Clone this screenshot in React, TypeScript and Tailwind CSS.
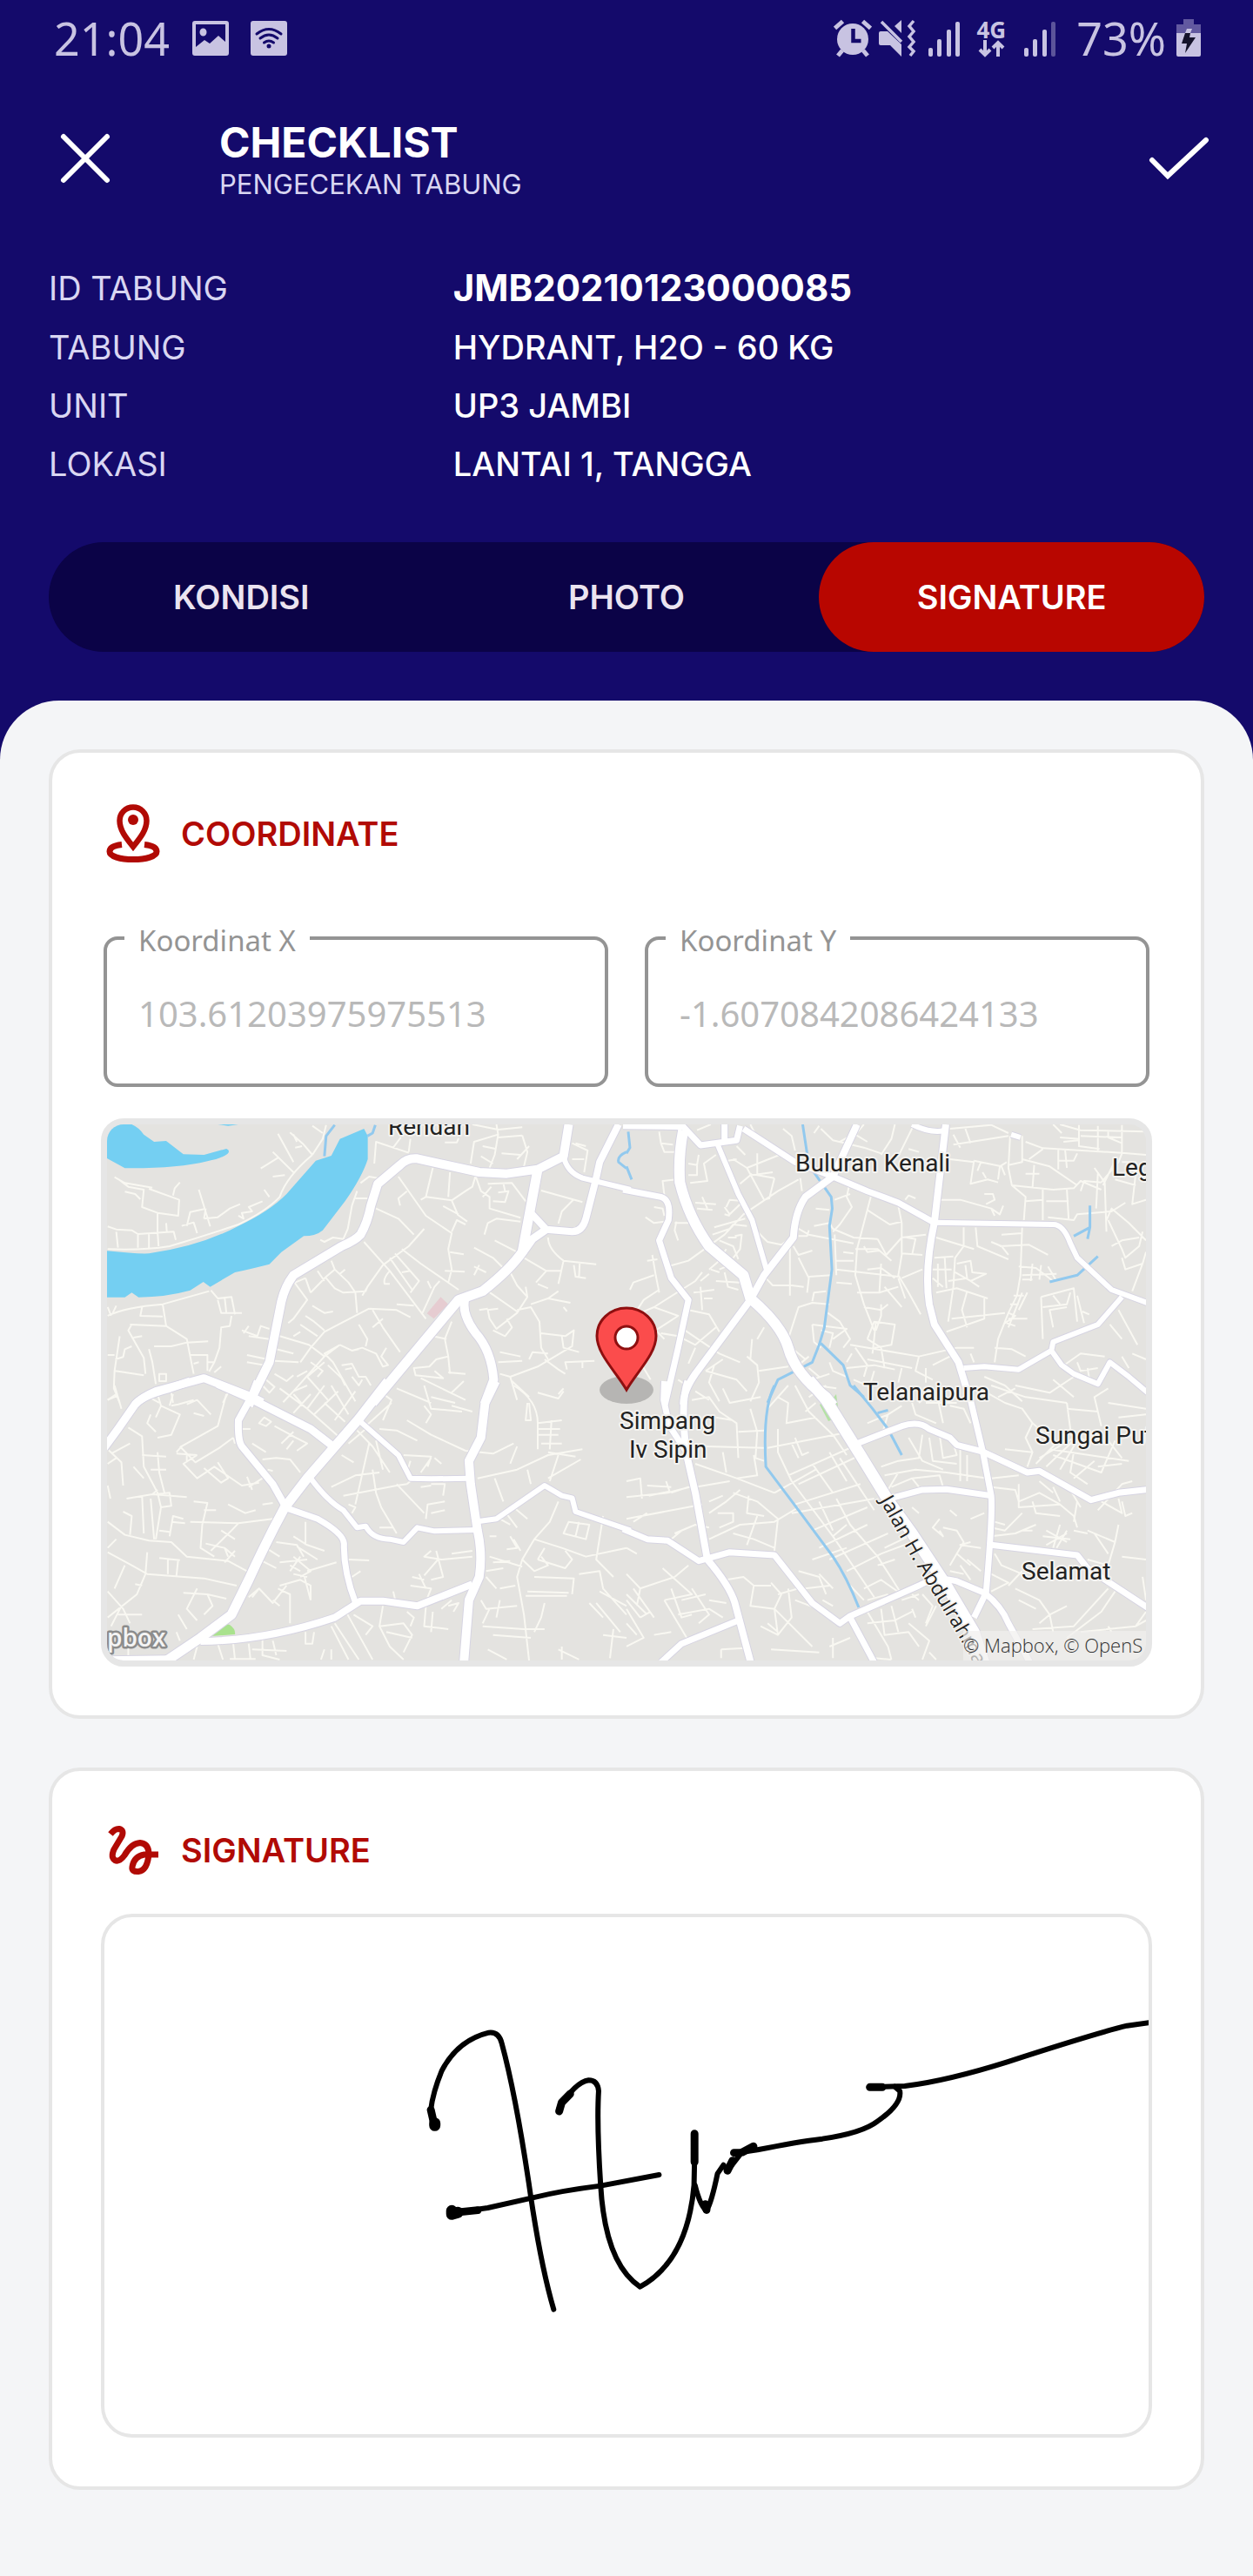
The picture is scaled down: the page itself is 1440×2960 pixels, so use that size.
import { useState } from "react";

const DETAILS = [
  { label: "ID TABUNG", value: "JMB20210123000085", strong: true },
  { label: "TABUNG", value: "HYDRANT, H2O - 60 KG" },
  { label: "UNIT", value: "UP3 JAMBI" },
  { label: "LOKASI", value: "LANTAI 1, TANGGA" },
];

const TABS = ["KONDISI", "PHOTO", "SIGNATURE"];

const COORDINATES = [
  { id: "koordinat-x", label: "Koordinat X", value: "103.61203975975513" },
  { id: "koordinat-y", label: "Koordinat Y", value: "-1.6070842086424133" },
];

interface Road {
  w: number;
  d: string;
}

interface Tile {
  transform: string;
  streets: string;
  rivers: string;
  roads: Road[];
}

// The map is split in four tiles, each with its own grid
const TILES: Tile[] = [
  {
    transform: "translate(-23 -20) scale(0.3954 0.3333)",
    streets:
      "M80 242L110 262L190 278M92 250L120 275L165 285L160 345L205 365L265 375L268 320L180 282M110 292L140 300L155 318M250 305L255 280L270 260M205 365L205 430L208 480M230 400L232 430M60 412L85 422L130 425L148 438L252 430L258 458M148 438V485M180 438V485M85 430L90 485M60 490Q160 495 240 480Q340 445 440 405Q520 360 560 310Q580 240 655 165M655 165L685 110L695 62M655 165L630 130L590 88M625 135L605 140M610 120L600 95M600 190L555 92M655 65L685 90M600 225L540 155M555 175L505 212M575 235L540 240M325 285L358 412M290 410L300 362L340 352M275 410L310 398L320 435M340 385L380 380L415 350L445 335M345 350L340 385M440 375L455 385L450 365L480 360L470 345L510 325" +
      "M530 310L515 285M835 195L840 120L935 158M940 110L935 155M890 140L912 105M1040 122H1075L1080 108M1190 60L1195 95L1185 165L1170 210M1120 60L1195 78L1265 70M1195 105L1265 98M1115 195L1125 120L1195 95M1150 135L1190 145M1205 160L1260 165M1145 170L1180 195M1250 180L1285 135M1270 205L1280 155L1265 98M1410 125L1455 150L1445 225M1420 125L1450 135M1410 180H1445M795 262L820 240L845 245M780 315L815 315M785 290L770 340L758 420L745 455L715 450L690 465L678 458M840 350L905 385L950 440M905 240L985 375L1060 435L1050 490L1060 560L1050 605M980 420L935 480L860 545L815 620L800 650M930 290L905 315L910 340M1005 210L985 310L970 320M985 310L1060 322L1100 290L1120 275L1130 235M1060 322L1078 372L1105 395M1055 225L1050 310M1035 342L1080 370M1060 430L1075 390L1100 405M1040 565L1098 568M1055 500L1095 508" +
      "M1130 240L1145 290L1170 310V350L1260 382M1165 265L1235 262L1275 325M1180 325L1215 328L1225 290L1195 295M1215 290L1210 262M1150 310L1175 275M1155 440L1165 400L1190 385L1260 395M1320 288L1440 328M1415 318L1380 360L1370 402M1340 450Q1340 490 1385 530L1480 542M1385 530L1370 610M1415 545L1420 585L1450 590M1430 585L1432 540M1270 520L1335 565L1380 565M1335 565L1305 605M1310 610L1340 625M1185 460L1250 500M1125 485L1180 520L1210 555M1140 545L1125 580M1160 570L1125 550M1230 570L1250 615L1280 655L1250 710L1190 765L1170 730L1165 700L1195 695M1165 635L1250 705M1140 700L1165 695M1250 700L1290 690L1315 740L1320 830L1340 870M1280 655L1275 620M1290 680L1340 660L1405 675M1340 660L1370 635M1385 690L1395 705M1180 770L1215 790L1235 760L1220 730" +
      "M1320 780L1390 790L1415 770L1410 825L1310 895L1230 930M1330 870L1370 905L1390 920M1380 790L1385 830L1430 845M1395 905L1390 880L1475 875M1440 880V900M1200 845L1260 860M1195 880L1265 875M1285 870L1295 845L1340 850M1200 920L1230 930L1250 1010M1235 945L1285 1000M1310 985L1370 1005L1385 980M805 465L880 565L985 730M915 490L970 540L1080 630M880 520L945 630M895 505L965 600L940 640M915 570L940 565M880 565Q860 590 865 610L880 610M990 600L1000 625M975 710L1010 620L1025 600M900 680L950 685M710 530L720 560L695 585L650 640M720 560L760 605L780 640L785 710M695 590L720 625L745 640L810 635L815 620M600 600L640 665L600 730L585 745M635 590L650 640M670 565L690 600M605 605L635 590M735 575L750 560M655 685L690 710L715 705" +
      "M820 695L690 775L650 830L620 880M820 695L900 700L940 725M830 700L860 760L910 845M860 730L830 760M790 750L815 800L810 825M735 820L690 860L600 980M735 820L770 840L790 835M735 820L690 850L715 880L780 1015M690 860L645 820L560 790M770 840L800 830L840 850L860 895L875 890L855 860L870 830M635 720L660 740L690 770M620 750L670 790M600 790L620 775M550 835L600 850M545 875L615 880M690 880L640 930L700 1010M650 880L685 910L670 930M700 890L740 935L750 960M740 890L770 885L790 930L810 930L825 960M750 905L770 900M770 930L790 960L800 940M545 920L580 945L600 925M520 940L545 965L530 985L510 960M640 910L610 930M570 1018L600 980L640 960M1060 740L1040 800L1050 860L1055 920M1005 790L1045 800M1050 860L1015 870L995 895L950 900L955 925L1035 935L1010 910M1050 915L1100 920M1095 945L1060 985M970 935L1100 1010" +
      "M60 720Q110 690 220 680L355 635M60 690L70 720M85 685L75 710M160 690L155 720L220 722M220 680L230 755L125 750M360 632L380 660L420 655L430 715M400 655L405 710M380 665L390 710H450M420 720L415 755L390 760L385 830L370 880L355 912M230 755L290 800L310 920M195 825L245 825L290 812L352 808M130 750L120 770L165 865L170 920M180 835L190 880L200 955M95 790L80 910L78 970L95 1020M60 855H80M82 870L105 862L110 835L130 825M82 910L165 925M135 795L160 790M300 855H350V910M350 880H370M310 885L325 880M370 915L390 895M210 920H230V945H210ZM455 780L470 755M450 770L495 790L505 755L530 765M470 790L530 800M465 855L525 870M465 880L515 890M60 1010L85 990M245 985L250 1020M410 985L395 1020M180 1000L210 1020",
    rivers: "M720 62L695 100L690 170M838 62L830 90L815 100M1568 155Q1540 170 1545 190L1568 212",
    roads: [
      { w: 9, d: "M1545 60L1490 190L1478 255L1450 385Q1440 430 1410 430L1335 422L1290 365" },
      { w: 11, d: "M1400 60L1385 170L1310 215L1220 230L1140 225L960 178Q930 175 910 200L845 265L825 340Q815 400 795 440Q780 460 740 480L600 580Q575 620 565 670L530 880L480 1000L470 1030" },
      { w: 12, d: "M1310 215L1265 500Q1230 560 1150 635L1080 665L830 1020" },
      { w: 10, d: "M1268 500L1295 455L1335 422" },
      { w: 7, d: "M1385 170Q1395 225 1440 245L1580 285" },
      { w: 11, d: "M1100 655Q1085 710 1130 780Q1175 840 1182 940L1155 1025" },
      { w: 10, d: "M140 1025Q160 1000 200 980L340 935L480 1000L510 1018" },
    ],
  },
  {
    transform: "translate(597 -20) scale(0.3954 0.3333)",
    streets:
      "M95 85L100 125L135 130M100 125L110 155L140 155M180 195L205 200L210 165M180 235H205V195M185 262L235 255L225 195L260 165M205 80L245 60M360 60L385 120L410 115M320 135L345 165M310 180L350 210L400 320L415 315L430 245M350 210L445 165M365 235L425 225M330 265L365 230M380 160V235L430 245M455 75L480 100L490 150M295 185L320 180M545 90L560 65M565 75L600 115L690 140L740 160M620 120L650 100M690 60L665 95L700 120M780 60L770 110L740 165M790 170L835 62M820 145L850 155M500 250L440 290L340 370L285 440L180 530L120 550M505 245L510 290M290 345L300 320L345 325M285 345L300 370L335 330M285 370L300 375M200 330L260 335M205 350L250 355M220 310L235 350M255 415L345 385M250 440L300 420L310 405L350 410M315 445L335 440L330 490L310 520M295 450L320 450M270 460L310 480L325 525M240 560L265 535L290 490M245 560L270 570M240 575L215 600M55 380L80 400L110 395" +
      "M80 345L105 350L110 375M140 400H180M145 395L140 425L150 460M110 305L105 255L145 250M380 430L410 465L450 475L480 450M405 590L425 615L480 615M475 480V650M485 480L500 510L540 495M500 520L530 590L525 640M480 615L515 620M650 255L640 310L655 345L620 405L600 430M605 320L650 300M650 265L680 280M710 310L690 400L670 490L665 580L690 680L720 770M700 355L765 405L800 395M790 340L800 400V510L790 580L820 640L855 715M810 320L820 305L840 315M500 420L530 440L660 470M500 445H525L530 425M550 350L590 355M545 410L590 400L600 420L660 450L730 455M605 440L610 580M630 500L660 505M610 560L790 585M610 530L660 530M665 490L730 490L770 530M730 455L755 510L800 450L870 440M690 480L700 500L735 495M815 450L840 455L830 510M800 505L860 510M610 605L655 610M595 580L530 585M670 640L735 640M740 540L735 640L790 620M700 560L740 555L780 590" +
      "M590 680L540 675L500 690L470 800M540 670L545 640L580 635M740 680V720L725 770M690 690L740 700L760 680M750 620L800 690M790 590L810 660M800 590L860 560M910 320L970 320L1060 350L1085 370L1095 340M1060 350L1070 375M1040 300L1065 300L1070 320L1045 335M980 415V480L955 520L950 620L935 740M900 450L1010 490M1015 415L1020 480L1060 500L1110 525M895 520L950 515M890 560L945 560M905 540V620M925 520L930 625M890 590L920 620M900 640L960 625L1050 660M960 540L1000 530L1005 570L1045 575L1000 600L1025 620M955 570L1000 600M945 730L1100 710M990 635L975 700L990 760M1040 660V730L930 775M935 600L990 590L985 545M1150 415L1145 580L1135 650L1110 710L1080 800L1070 880M1090 440L1150 435M1085 480L1170 475L1225 510M1060 465L1090 480L1110 510M1140 550L1190 555L1240 600M1150 580L1250 575M1180 540L1175 600M1205 545L1200 595M1225 550L1250 600M1150 595H1180M1110 710L1130 720L1100 745" +
      "M1125 650H1155M1115 680H1140M1105 745L1130 755M1110 730H1165M1150 640L1110 760M1165 640L1140 700M1205 655L1300 625L1310 740M1205 655L1210 800M1210 690L1280 680L1290 640M1240 650L1260 680M1240 760L1230 700L1280 690M1325 705L1345 715M1310 650L1330 745M940 75L1060 62L1110 90M950 130L1110 100M950 95L970 140M985 75L1000 125M1115 100L1110 210L1120 270L1160 310L1155 390M1110 200L1150 190L1150 100M1120 270L1240 285L1300 280L1320 255L1380 285M1080 250L1085 205L1105 190M1010 185L1090 205L1100 235M1010 185L1000 265L1050 250L1080 260M940 180L1010 190M1030 190L1020 220M1045 245L1035 225M1160 120L1210 142L1440 158L1510 165M1150 180L1230 205L1310 270M1210 145L1170 180M1255 145V215M1275 150L1280 210M1255 185L1300 185L1310 160M1160 230H1200M1185 200L1180 280M1210 285V390M1160 325L1210 320M1220 325H1285M1280 285L1285 385M1225 380L1300 390L1310 370L1410 360L1450 330" +
      "M1240 60L1265 90M1260 60L1320 80L1510 85M1315 62V135L1375 145M1320 100L1440 105M1370 65V150M1400 85V105L1440 125M1440 62V160L1430 190L1380 260M1260 105L1315 110M1270 120L1315 115M1440 190L1480 190L1500 240M1360 210L1390 260L1395 430M1370 230L1365 350M1420 185L1385 270M1320 290L1330 255L1380 260M1480 230L1470 335L1510 320M1420 250L1480 270M1395 390L1410 350L1460 400L1510 460M1400 390L1440 490L1450 520L1490 480L1500 430M1410 480L1440 460L1490 450M1440 520L1450 560L1500 540L1510 500M1500 540L1470 635M1430 700L1485 820M1405 750L1440 800M1260 900L1320 850L1390 860M1310 880L1320 910L1370 900M1340 900L1345 935M1440 860L1460 900M1470 850L1510 870M1240 940L1300 1000M1300 930L1230 985L1130 960" +
      "M75 510L85 580L95 640M60 530L90 525M95 630L50 665L20 720M10 630L20 605L80 580M220 570L200 600L80 690L0 730M80 690L150 720L85 770L110 800M195 640L255 630M215 620L220 700M225 660L250 660M260 600L330 605M285 570L295 620L325 630M270 560L310 540M180 700L240 715L270 775M100 780L150 790L200 820L260 760M200 830L180 885M170 770L270 850L330 880M150 940L175 960M230 910L320 940L350 980M230 910L280 870M255 890L240 950L270 1015M370 640L390 700M365 800L360 870L380 890L385 950L360 1015M385 910L470 895M380 890L350 860M400 760L380 800M490 840L520 870M530 860L500 890M540 750L545 810L565 830M540 750L640 765L600 800M585 710L620 740L650 800L630 830M565 770L600 780L590 830M700 800L720 740L780 750L770 820L720 830M700 800L740 830L750 900M725 740L715 850M650 820L850 860M655 850L640 880M665 830L700 890L690 930M700 870L830 900M850 860L840 910L890 940M850 860L960 830L1010 830M890 890L940 860M870 900V950M640 900L720 890L780 905M590 880L600 910L640 930M540 940L590 920M550 960L610 970M560 930L530 900M530 1000L580 960M660 940L700 960M720 910L710 950M800 900L790 950M1070 830L1120 835L1160 860M1000 850L1010 880M1040 930L1100 960L1150 1015M0 870L50 900L70 940",
    rivers:
      "M512 60L530 200L595 310L598 350L590 410L597 560L575 760L560 820L540 880L440 940L410 1020M565 815L630 890L650 960L690 1000M1347 340V415L1300 445M1347 415L1340 455M1370 515L1310 580L1230 603M5 85L10 140L0 160M0 205L15 250",
    roads: [
      { w: 8, d: "M-10 285L100 310Q130 320 122 390L95 460L130 590L180 665L150 830L112 1025" },
      { w: 8, d: "M-10 65L165 68L215 132L320 115L330 65M285 60V120" },
      { w: 7, d: "M265 130L325 300L365 390L408 565" },
      { w: 8, d: "M340 75L490 190L600 240L700 290L790 330L892 397" },
      { w: 9, d: "M670 60L600 240L520 310Q490 360 485 450L400 580L360 665L200 920Q165 980 165 1025" },
      { w: 9, d: "M928 60L895 397Q865 560 880 680L895 750L965 880L988 970" },
      { w: 7, d: "M830 60Q880 90 922 82M1118 95L1145 105" },
      { w: 7, d: "M892 398L1240 405Q1270 405 1290 470L1310 520L1410 630L1520 678" },
      { w: 7, d: "M1440 655L1370 750L1240 810L1235 840L1140 905L1040 895L980 900M1235 840L1265 890L1300 920L1370 955L1405 880L1460 930L1520 990" },
      { w: 13, d: "M165 80Q150 170 155 260Q180 380 240 480L340 580L360 660Q450 750 470 830Q490 920 580 1000L600 1030" },
    ],
  },
  {
    transform: "translate(-23 300) scale(0.3954 0.3333)",
    streets:
      "M80 0L100 80M60 50L90 35M120 145L160 175L165 280L205 370L215 420L245 415L240 370L200 375M60 220L100 265L105 345M70 235L125 200M60 270L85 250M205 230L210 300L225 370M135 280L165 320M160 240L230 245M185 290H230M185 100L175 130L200 160M205 30L215 70L270 100L245 170L205 180M250 30L240 70M215 70L200 110M245 70L265 65L310 50M290 65L320 50L360 100M405 30L380 140L275 210L260 230M310 95L340 105M270 210L315 265L385 215L425 180M260 235L320 240M290 235V265M320 240L280 270L320 320L370 280L450 345L500 335M340 285L390 335L410 320L380 265M425 180L430 200M60 345L68 390M115 390L190 375L205 360M160 380L165 510M185 390L195 530M215 420L200 530M105 435L130 450L125 515M190 375L290 385M60 470L110 515L180 535L245 540L290 590L410 605L465 640M60 560L85 530M60 575L130 620L175 650L340 665L435 690" +
      "M175 575L170 650L145 720L60 800M235 600V650M265 600L260 655M210 595L270 602M80 700L110 620M140 685L160 690M60 710L105 770L125 820M90 790H160M100 760L70 830M280 715L350 720L365 760L340 790M350 720L405 735M320 700L290 770L320 810M240 520L250 450L280 460M210 500L240 505M245 470L285 475M310 400L350 405L335 480L330 560L370 590M300 470L440 475L540 460M440 475L420 500L360 570M340 430H375M410 410L460 440L490 430M345 545L400 560L430 590M390 500L430 530M400 560L410 590M400 610L430 570M510 410L540 405M470 350L510 320M465 315L480 360M480 200L520 230M510 255L550 250L590 255L620 300M525 290L540 295M500 130L515 110L535 125L520 140ZM440 150H475M545 140L600 175M565 200L600 160M590 170L640 200L610 225M580 220L600 190M560 10L640 80L740 185M600 30L630 70M650 30L600 95M640 80L690 0M690 60L750 125M710 0L760 100M660 100L730 20M720 120L780 20" +
      "M740 240L775 265M785 155L830 210L880 300M840 190L860 290M820 200L780 410M810 150L760 200M860 120L885 50L850 20M810 140L885 60M850 150L900 155L960 190M710 350L780 310L850 300M745 380L900 345L930 340M760 410L780 420L770 440M830 290L840 370L855 420L900 510M850 490H890M900 340L980 440M985 460L990 410L1040 400M1000 440L1040 430M920 240L1000 245L990 280M1000 250L970 300M1010 250L1030 270M940 260L930 300M1000 340H1040L1035 380M970 350L1000 345M930 340L960 310M930 120L1000 170L1100 225M980 70L1000 100L985 130M980 0L1000 80L1090 90M1060 70L1120 90M900 10L1000 60M1000 40L1070 60M1100 225L1180 235L1240 200M1135 320L1250 290L1340 240L1440 220M1185 320L1210 400M1280 290L1290 340M1340 320L1435 255M1345 330L1370 240M1240 0Q1310 50 1310 130V220M1310 130L1380 120M1310 150H1375M1310 170H1370M1320 200H1380M1350 120L1345 220M1280 60L1275 120H1290L1285 60M1250 210L1230 270M1340 230L1420 245M1370 30L1385 10" +
      "M1370 400L1345 470L1300 530L1265 600L1250 660L1270 790L1285 950M1240 420L1280 460M1215 435L1250 490M1200 460L1230 480M1400 470L1460 480L1450 530L1385 510ZM1430 470L1420 520M1500 450L1480 600L1530 660M1300 530L1380 560L1450 590L1568 560M1310 600L1390 630L1410 600L1390 570M1330 560L1310 600M1265 600L1300 640L1340 620L1320 590M1300 660L1415 665L1410 720M1280 710L1400 715M1275 725H1395M1170 590L1265 625M1180 610L1230 605M1160 640L1210 630M1160 660L1190 700M1240 530L1260 570M1230 520L1250 560L1220 565M1170 520H1190M1200 700L1245 690M1430 650L1490 640L1500 700L1568 790M1490 710L1568 760M1480 750L1550 850M1530 840L1520 940M1500 860L1568 870M1460 750L1500 800M1145 740L1160 770L1250 760M1170 770L1150 820M1200 740L1190 800M1150 830L1270 840L1330 840M1180 860L1290 870M1330 750L1320 800L1300 850M1165 910L1220 945M1380 900V945M1370 910L1430 945" +
      "M550 540L610 550L630 590M600 520L640 550L690 570M635 470V550M610 555L670 600M600 590L650 640L620 660M560 610L640 600M620 590L590 640M590 620L620 640M640 640L725 610M560 690L620 670L650 690V740M580 690L540 750L500 700L480 730M555 700L590 720V820M540 740L560 760M600 650L640 660M630 650L650 740M500 600L550 630M520 560L560 590M470 730L500 700M760 600L820 603M770 660L795 640M755 785L790 860L830 945M720 820L790 945M710 830L760 945M775 790L830 830L810 860M860 760L850 830L880 900L920 945M850 830L920 820L945 860L920 920M870 850L945 870M930 780L950 800L940 830M985 760L980 830L1050 840M1005 780L1000 850M890 710L895 735M940 690L1000 700L990 730M945 660L980 670M965 650L985 700M1000 570L980 590L1030 600L1120 590M1015 570L1035 660L1000 670M1020 600L980 655M1060 580L1120 570M1030 770L1060 740M1050 760L1080 750L1065 780M380 890L395 945M425 890L430 945M470 890L475 945M510 860V930L560 945M480 910L580 915M540 880L550 930M635 850V890H655L660 850M265 790L290 840M260 850L270 880M415 943H490M120 900V945M320 900L310 945M690 910L680 945M710 910V945",
    rivers: "",
    roads: [
      { w: 10, d: "M50 215L90 150L140 65Q160 35 240 10L300 -15M380 -5L475 45L650 150L712 207" },
      { w: 9, d: "M495 -15L475 45L440 120Q438 190 450 210L540 340L578 420" },
      { w: 7, d: "M790 120L905 240L940 320L1000 322L1112 320" },
      { w: 7, d: "M650 320Q700 400 745 430L785 490L810 485Q830 530 880 530L920 540L960 490L1010 502L1130 498" },
      { w: 8, d: "M585 425L670 460Q745 510 747 545Q745 640 780 748" },
      { w: 7, d: "M1140 468L1190 460L1330 345L1380 380L1410 388L1420 435L1580 500" },
      { w: 9, d: "M330 882Q520 880 720 800L795 743L860 743L960 760L1120 685" },
      { w: 7, d: "M50 943L240 940" },
      { w: 11, d: "M1188 -15L1157 60L1145 180L1110 260L1115 340L1135 500Q1150 580 1140 660L1110 740L1095 960" },
      { w: 12, d: "M875 -15L790 115L640 320L575 420Q520 540 470 670L420 790L330 870L230 950" },
    ],
  },
  {
    transform: "translate(597 300) scale(0.3954 0.3333)",
    streets:
      "M200 20L240 50M190 50L240 40L270 90L320 130L325 250M230 210L400 215M260 110L310 120M280 10L300 60L390 40M360 80L380 160L375 250L400 260M325 160L400 155M470 0L410 80M440 40L470 60L465 130L550 110M490 0L530 90L600 170L640 240M440 150L440 230L480 330L600 520L720 730M550 60L520 90M410 215L650 160M480 200L500 250M490 180L510 240L530 230M470 310L660 210M500 340L680 240M430 370L550 290M540 270L600 370M590 230L640 330M620 250L720 430M490 410L680 340M480 440L720 390M540 500L700 420M560 400L600 500M610 390L650 480L730 590L800 720M560 560L700 480M590 600L760 510M600 520L640 480M640 640L740 580L830 540M690 700L740 670L800 720L860 690M650 690L690 740M700 740L760 720M750 560L820 520M780 600L730 620M200 270L320 320L430 370M280 230L290 300M320 320L380 310L370 240M200 350L300 330M0 385L120 370L200 345M0 330L40 320L45 390M60 345L130 350M65 380L125 365L115 330M130 370L180 350" +
      "M0 460L220 410M20 470L60 440M240 440L290 400L330 360M265 440H310V470L270 490M310 370L380 400L440 460L430 570M355 380L350 440L400 450M240 530L330 480L430 470L500 420M310 510L370 530L430 560M380 450L350 550M240 400L280 380M140 510L200 480L240 490M130 530L160 500M0 560L30 580M0 650L40 700L140 660M20 700L80 800M0 720L60 790M0 740L40 800M0 770L50 870L0 900M40 700L30 760M105 630L190 720L110 740M180 620L140 660M130 700L160 800L190 790M110 740L140 800L180 880M160 740L230 720M150 790L240 770L280 800M190 700L240 790L210 820M240 740L290 750M290 670L340 660L370 690L360 760L430 770L450 720L420 680M370 690L420 690M430 770L440 860L390 830M430 770L540 900M440 860L480 800L470 700M410 820L440 850M440 720L500 700M420 910L560 920M490 740L600 790M500 640L560 660L580 720M540 600L640 560M520 700L590 690M570 740L600 760M590 900L650 870M600 870V940" +
      "M700 780L760 900L770 945M740 770L750 860L820 850L850 900M770 760L790 850M700 820L780 810L830 780M820 820L880 880L860 945M830 770L840 800M860 720L890 760L870 820M900 760L870 830M830 720L850 740M800 740L850 720M940 750L970 800M760 100L740 180M700 130L760 100L800 70M830 60L840 100L900 130M850 60L880 30M900 20L920 130M870 60H960M940 70L980 80L1000 130M740 280L790 260L850 250L860 170M820 180L860 260L920 290M880 180L890 260L960 270M910 170L920 250L960 240L950 200M970 210V330M750 310L840 290L930 300L1050 320M770 350L830 320L850 350M760 360L790 300M830 320L910 310L920 350M1060 320L1140 310M990 240L990 330M1040 20L1100 60L1150 80L1180 130L1220 170M1080 40L1130 10M1060 0L1160 40L1280 60M1180 130L1160 180L1180 230L1165 280M1280 60L1290 150L1190 270M1280 80L1370 90L1380 140M1370 90L1360 40L1400 10M1400 60L1510 80M1290 170L1360 200M1100 220L1180 230M1200 250L1300 180M1220 280L1300 190M1260 290L1310 190M1230 220L1460 260M1240 240L1380 300L1420 190" +
      "M1300 230L1290 300L1340 340M1360 260L1300 320M1370 280L1440 270M1400 190L1440 250M1430 110L1510 100M1060 350L1130 360L1140 400M1140 340V420L1260 410M1140 400L1200 370L1260 410L1300 450L1310 490M1240 350L1260 400M1200 330L1240 370M1180 400L1190 440L1260 450M1290 360L1320 420M1310 400L1300 470M1370 430L1440 340L1470 330M1380 400L1440 440L1430 390M1440 400L1450 450L1470 440M1060 490L1100 500L1150 440M1070 470L1100 480M1060 520L1130 510L1190 480M1150 500L1180 500M1210 520L1290 530M1220 500L1280 540M1260 480L1240 560M1280 500L1250 560M1220 550L1280 510M1300 500L1340 510M1340 500L1420 540L1430 480M1360 510L1400 580M1420 540L1400 620L1340 600M1440 590L1510 600M1500 660L1510 740M1070 580L1090 620L1150 650M1060 650L1110 680L1060 710M1150 640L1110 690M1130 700L1200 740L1230 790L1200 820M1230 790L1280 760M1230 790L1240 850M1140 740L1190 770M1180 840L1300 830L1400 700M1280 870L1380 780L1420 710M1320 850L1480 830L1510 810M1480 830L1510 780M1400 830L1410 850" +
      "M910 460L890 490L920 520L910 500M920 490L960 500L980 540L960 580L1000 620M940 430L960 450M1000 460L1040 440M1000 540L970 550L1030 560M960 580L940 620M990 600L1030 640M970 620L1000 670M940 640L980 650M830 420L850 440M560 650L600 700M880 920L900 945M720 940L770 945M80 860L130 850M0 820L30 860M40 800L70 780M275 910L345 905M275 910V940",
    rivers: "M430 0Q395 80 405 280L500 430L600 590Q640 660 675 765M660 0L715 80L760 150L800 240M730 95L760 85",
    roads: [
      { w: 8, d: "M110 -15L108 50L125 140L180 240" },
      { w: 9, d: "M178 -15Q155 60 175 240L200 370L235 600Q300 690 315 750L362 960" },
      { w: 8, d: "M-10 495L60 530L120 535L210 605L300 575L430 585L540 750L620 820L650 795L850 690Q900 655 960 675L1040 715Q1090 760 1110 820L1175 960" },
      { w: 8, d: "M325 810L160 890L100 955M650 800L720 955" },
      { w: 8, d: "M670 200L800 140Q850 120 880 150L940 180L960 205L1035 228L1165 300L1200 295L1350 395L1430 370L1520 358" },
      { w: 8, d: "M770 388L860 360L930 358L1060 380" },
      { w: 8, d: "M1000 50L1035 225L1060 380Q1065 440 1045 715L1010 800" },
      { w: 8, d: "M1060 550L1310 585L1340 630L1520 770" },
      { w: 14, d: "M530 -20L580 50L680 240L760 395L830 510L930 690L1010 850L1040 960" },
    ],
  },
];

const PLACES = [
  { name: "Rendan", x: 323, y: 12 },
  { name: "Buluran Kenali", x: 791, y: 54 },
  { name: "Leg", x: 1155, y: 59 },
  { name: "Telanaipura", x: 869, y: 317 },
  { name: "Simpang", x: 589, y: 350 },
  { name: "Iv Sipin", x: 600, y: 383 },
  { name: "Sungai Put", x: 1067, y: 367 },
  { name: "Selamat", x: 1051, y: 523 },
];

function StatusBar() {
  return (
    <div className="flex items-center justify-between pt-2 pr-[60px] pb-1 pl-[62px] font-['Noto_Sans',sans-serif] text-[52px] leading-[72px] text-[#c8c3e2]">
      <div className="flex items-center">
        <span>21:04</span>
        <svg className="ml-[26px] h-10 w-[42px]" viewBox="0 0 42 40" fill="currentColor">
          <path
            fillRule="evenodd"
            d="M3 0h36a3 3 0 0 1 3 3v34a3 3 0 0 1-3 3H3a3 3 0 0 1-3-3V3a3 3 0 0 1 3-3zM4 4v26l10-8 6 4 10-9 8 7V4zM12.500 8.500a4 4.500 0 1 1 0 9 4 4.500 0 0 1 0-9z"
          />
        </svg>
        <svg className="ml-[25px] h-10 w-[42px]" viewBox="0 0 42 40">
          <rect width="42" height="40" rx="3" fill="currentColor" />
          <g fill="none" stroke="#140a6b" strokeWidth="3" strokeLinecap="round">
            <path d="M7 15q14-11 28 0M11 20q10-8 20 0M15.500 25q5.500-4 11 0" />
          </g>
          <circle cx="21" cy="29" r="2.500" fill="#140a6b" />
        </svg>
      </div>
      <div className="flex items-center">
        <svg className="h-11 w-11" viewBox="0 0 44 44" fill="none" stroke="currentColor" strokeWidth="5">
          <circle cx="22" cy="23" r="18" fill="currentColor" stroke="none" />
          <path d="M1.500 10.500l9-8M42.500 10.500l-9-8M10 36l-5 6M34 36l5 6" />
          <path d="M22.500 11v14h9" stroke="#140a6b" strokeWidth="4.500" />
        </svg>
        <svg className="ml-2 h-11 w-[43px]" viewBox="0 0 43 44">
          <path fill="currentColor" d="M2 14h8l16 15v14L13 30H2a2 2 0 0 1-2-2V16a2 2 0 0 1 2-2zM18 8l8-7v15z" />
          <g fill="none" stroke="currentColor" strokeWidth="3.500">
            <path d="M3 3l23 23M40 2l-5 6 5 6-5 6 5 6-5 6 5 5-4 5" />
          </g>
        </svg>
        <Signal className="ml-3.5 h-11 w-9" />
        <div className="ml-[18px] flex w-9 flex-col items-center">
          <span className="text-[26px] leading-6 font-bold">4G</span>
          <svg className="h-5 w-8" viewBox="0 0 32 20" fill="none" stroke="currentColor" strokeWidth="4">
            <path d="M9 0v17M3 11l6 6 6-6M24 19V3M18 9l6-6 6 6" />
          </svg>
        </div>
        <Signal className="ml-5 h-11 w-9" faded />
        <span className="ml-6">73%</span>
        <svg className="ml-3 h-11 w-7" viewBox="0 0 28 44">
          <path d="M8 0h12v6h8v10H0V6h8z" fill="#6259a0" />
          <path d="M0 16h28v25a2 2 0 0 1-2 2H2a2 2 0 0 1-2-2z" fill="currentColor" />
          <path d="M12 11h6l-2 5h-6z" fill="currentColor" />
          <path d="M10 16h6l-1 5h7L10 39l2-11H6z" fill="#15132b" />
        </svg>
      </div>
    </div>
  );
}

function Signal({ className, faded = false }: { className: string; faded?: boolean }) {
  return (
    <svg className={className} viewBox="0 0 36 44" fill="currentColor">
      <rect x="0" y="33" width="5" height="10" rx="2" />
      <rect x="10" y="23" width="5" height="20" rx="2" />
      <rect x="21" y="12" width="5" height="31" rx="2" />
      <rect x="31" y="3" width="5" height="40" rx="2" opacity={faded ? 0.4 : 1} />
    </svg>
  );
}

function MapView() {
  return (
    <div className="mt-9 overflow-hidden rounded-[26px] border-[7px] border-[#e6e6e6] bg-[#e6e6e6]">
      <svg className="block h-auto w-full" viewBox="0 0 1194 616" role="img" aria-label="Map">
        <rect width="1194" height="616" fill="#e4e3e0" />
        <g transform={TILES[0].transform}>
          <path
            fill="#74cff2"
            d="M50 60H130Q150 70 165 95L195 120L230 117L280 163L340 165L405 144Q418 150 408 162Q390 178 350 187Q260 213 110 211L50 172ZM380 60H440L410 65ZM50 495Q140 507 180 505Q330 480 440 410Q530 360 580 300L665 185L710 168L735 110L805 75L816 100V180Q800 240 750 325L685 425Q665 445 630 445L565 500L530 542Q470 560 430 570L358 620L338 603L300 632Q230 655 150 656L130 640L110 656H50Z"
          />
          <path fill="#e6ccd1" d="M1028 655L1050 680L1008 730L988 712Z" />
        </g>
        <path fill="#a9e28d" d="M119 588Q135 572 141 575Q148 580 147 586Z" />
        <path fill="#b4e2a4" d="M819 322L829 341L834 339L824 319ZM834 315L841 332L838 310Z" />
        {TILES.map((t) => (
          <g key={t.transform} transform={t.transform} fill="none" strokeLinejoin="round">
            <path d={t.streets} stroke="#f9f8f2" strokeWidth="2" vectorEffect="non-scaling-stroke" />
            <path d={t.rivers} stroke="#92c9ee" strokeWidth="3" vectorEffect="non-scaling-stroke" />
          </g>
        ))}
        {TILES.map((t) => (
          <g key={t.transform} transform={t.transform} fill="none" stroke="#d6d4e2" strokeLinejoin="round">
            {t.roads.map((r) => (
              <path key={r.d} d={r.d} strokeWidth={r.w + 1} vectorEffect="non-scaling-stroke" />
            ))}
          </g>
        ))}
        {TILES.map((t) => (
          <g key={t.transform} transform={t.transform} fill="none" stroke="#fff" strokeLinejoin="round">
            {t.roads.map((r) => (
              <path key={r.d} d={r.d} strokeWidth={r.w - 1} vectorEffect="non-scaling-stroke" />
            ))}
          </g>
        ))}

        <ellipse cx="597" cy="305" rx="31" ry="16" fill="#000" opacity="0.2" />
        <path
          d="M597 305C585 284 563 264 563 243a34 32 0 0 1 68 0C631 264 609 284 597 305z"
          fill="#fb4c4c"
          stroke="#8e0f10"
          strokeWidth="3"
        />
        <circle cx="597" cy="245" r="13" fill="#fff" stroke="#8e0f10" strokeWidth="3" />

        <g
          className="font-['Roboto',sans-serif] text-[28px]"
          fill="#222"
          stroke="#f4f3f0"
          strokeWidth="4"
          strokeLinejoin="round"
          paintOrder="stroke"
        >
          {PLACES.map((p) => (
            <text key={p.name} x={p.x} y={p.y}>
              {p.name}
            </text>
          ))}
        </g>
        <path id="jalan" d="M888 432L926 500L962 560L990 608L1010 650" fill="none" />
        <text
          className="font-['Open_Sans',sans-serif] text-[23px]"
          fill="#222"
          stroke="#f4f3f0"
          strokeWidth="3"
          paintOrder="stroke"
        >
          <textPath href="#jalan">Jalan H. Abdulrahman</textPath>
        </text>

        <rect x="984" y="582" width="210" height="34" fill="#f1f0ee" opacity="0.7" />
        <text x="984" y="607" className="font-['Open_Sans',sans-serif] text-[22px] font-light" fill="#333">
          © Mapbox, © OpenS
        </text>
        <text
          x="0"
          y="600"
          className="font-['Open_Sans',sans-serif] text-[28px] font-semibold"
          fill="#f4f4f4"
          stroke="#8c8c8c"
          strokeWidth="5"
          strokeLinejoin="round"
          paintOrder="stroke"
        >
          pbox
        </text>
      </svg>
    </div>
  );
}

function SignaturePad() {
  return (
    <div className="mt-[38px] overflow-hidden rounded-[36px] border-4 border-[#e6e6e6]">
      <svg className="block h-auto w-full" viewBox="0 0 1200 594" role="img" aria-label="Signature">
        <g
          transform="translate(320 78) scale(0.574 0.3333)"
          fill="none"
          stroke="#000"
          strokeLinecap="round"
          strokeLinejoin="round"
        >
          <g strokeWidth="6">
            <path vectorEffect="non-scaling-stroke" d="M96 430Q100 370 118 295Q150 190 212 164Q232 160 238 200Q265 370 292 680Q315 960 342 1118" />
            <path vectorEffect="non-scaling-stroke" d="M353 425Q385 335 412 328Q430 328 432 365Q428 480 436 690Q445 960 515 1040Q610 950 623 690L625 520" />
            <path vectorEffect="non-scaling-stroke" d="M625 690Q635 760 648 778Q658 750 670 650L682 620L690 640L715 585" />
            <path vectorEffect="non-scaling-stroke" d="M703 580L750 568Q830 540 880 530Q960 510 990 470Q1040 410 1035 365L1025 350" />
            <path vectorEffect="non-scaling-stroke" d="M975 352L1045 348Q1130 330 1250 265Q1430 165 1490 140L1540 128" />
            <path vectorEffect="non-scaling-stroke" d="M140 785L210 768L300 733Q360 708 436 692L553 654" />
          </g>
          <g strokeWidth="9">
            <path vectorEffect="non-scaling-stroke" d="M96 430L103 482M353 435L358 405L375 375M624 512V610M140 785L190 776M720 576L742 556M975 352L1000 352" />
            <path vectorEffect="non-scaling-stroke" d="M690 640L700 605M703 578H715M648 775L646 755" />
          </g>
          <path strokeWidth="13" vectorEffect="non-scaling-stroke" d="M104 476V484M138 778V790L150 784" />
        </g>
      </svg>
    </div>
  );
}

export default function App() {
  const [active, setActive] = useState("SIGNATURE");

  return (
    <div className="flex min-h-screen flex-col bg-[#140a6b] font-['Inter',sans-serif]">
      <StatusBar />

      <header className="flex items-center pt-12 pr-[50px] pl-[68px]">
        <button type="button" aria-label="Close" className="text-white">
          <svg className="h-[60px] w-[60px]" viewBox="0 0 60 60" fill="none" stroke="currentColor" strokeWidth="6" strokeLinecap="round">
            <path d="M5 5l50 50M55 5L5 55" />
          </svg>
        </button>
        <div className="mt-1 ml-[124px] flex-1">
          <h1 className="text-[48px] leading-[56px] font-bold text-white">CHECKLIST</h1>
          <p className="text-[31px] leading-10 text-[#d9d6f2]">PENGECEKAN TABUNG</p>
        </div>
        <button type="button" aria-label="Save" className="text-white">
          <svg className="h-[52px] w-[70px]" viewBox="0 0 70 52" fill="none" stroke="currentColor" strokeWidth="6" strokeLinecap="round">
            <path d="M4 28l18 18L66 5" />
          </svg>
        </button>
      </header>

      <dl className="grid grid-cols-[35%_1fr] px-14 pt-16 text-[38px]">
        {DETAILS.map((d) => (
          <div key={d.label} className="contents">
            <dt className={d.strong ? "leading-[70px] text-[#d9d6f2]" : "leading-[67px] text-[#d9d6f2]"}>{d.label}</dt>
            <dd
              className={
                d.strong ? "text-[42px] leading-[70px] font-bold text-white" : "leading-[67px] font-medium text-white"
              }
            >
              {d.value}
            </dd>
          </div>
        ))}
      </dl>

      <nav className="mx-14 mt-14 flex rounded-full bg-[#0b0347]">
        {TABS.map((tab) => (
          <button
            key={tab}
            type="button"
            onClick={() => setActive(tab)}
            className={
              tab === active
                ? "h-[126px] flex-1 rounded-full bg-[#b80600] text-[38px] font-semibold text-white"
                : "h-[126px] flex-1 rounded-full text-[38px] font-semibold text-[#ebe4f0]"
            }
          >
            {tab}
          </button>
        ))}
      </nav>

      <main className="mt-14 flex-1 rounded-t-[68px] bg-[#f4f5f7] px-14 pt-14 pb-20">
        <section className="rounded-[36px] border-4 border-[#e6e6e6] bg-white px-14 pt-[58px] pb-14">
          <h2 className="flex items-center gap-6 text-[38px] leading-[70px] font-semibold text-[#b10a05]">
            <svg className="ml-1.5 h-[70px] w-[62px]" viewBox="0 0 62 70" fill="none" stroke="currentColor" strokeWidth="7">
              <path d="M31 50C23 40 15.500 31 15.500 20a15.500 15.500 0 0 1 31 0C46.500 31 39 40 31 50z" strokeWidth="6.500" />
              <circle cx="31" cy="19" r="6" fill="currentColor" stroke="none" />
              <path d="M18 47.500Q4 49 4 55.500C4 61 16 64.500 31 64.500s27-3.500 27-9q0-6.500-14-8" />
            </svg>
            COORDINATE
          </h2>

          <div className="mt-[62px] grid grid-cols-2 gap-[42px] px-[3px] font-['Noto_Sans',sans-serif]">
            {COORDINATES.map((c) => (
              <fieldset key={c.id} className="rounded-2xl border-4 border-[#949494] pb-12">
                <legend className="ml-5 px-4 pt-1.5 text-[33px] leading-10 text-[#949494]">
                  <label htmlFor={c.id}>{c.label}</label>
                </legend>
                <input
                  id={c.id}
                  type="text"
                  readOnly
                  defaultValue={c.value}
                  className="block w-full bg-transparent px-9 pt-9 pb-1 text-[40px] leading-[56px] text-[#b9b9b9] outline-none"
                />
              </fieldset>
            ))}
          </div>

          <MapView />
        </section>

        <section className="mt-14 rounded-[36px] border-4 border-[#e6e6e6] bg-white px-14 pt-14 pb-14">
          <h2 className="flex items-center gap-6 text-[38px] leading-[70px] font-semibold text-[#b10a05]">
            <svg className="ml-1.5 h-[60px] w-[62px]" viewBox="0 0 62 60" fill="none" stroke="currentColor" strokeWidth="7">
              <path d="M5 11.500Q10 5 15 5.500Q21 7 18 14L9 29Q5 38 10 41.500Q15 44 21 36Q29 22 39 21.500Q48 22 49 33Q48 53 37 54.500Q29 55 30 49Q32 37 44 35H60" />
            </svg>
            SIGNATURE
          </h2>

          <SignaturePad />
        </section>
      </main>
    </div>
  );
}
